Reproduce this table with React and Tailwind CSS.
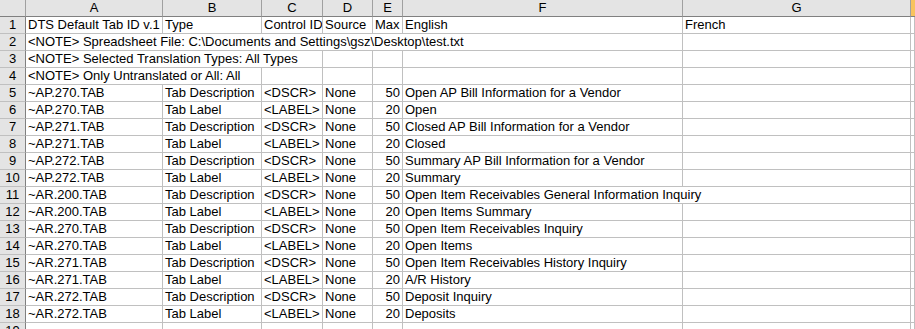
import React from "react";

const rows = [
  ["~AP.270.TAB", "Tab Description", "<DSCR>", "None", "50", "Open AP Bill Information for a Vendor"],
  ["~AP.270.TAB", "Tab Label", "<LABEL>", "None", "20", "Open"],
  ["~AP.271.TAB", "Tab Description", "<DSCR>", "None", "50", "Closed AP Bill Information for a Vendor"],
  ["~AP.271.TAB", "Tab Label", "<LABEL>", "None", "20", "Closed"],
  ["~AP.272.TAB", "Tab Description", "<DSCR>", "None", "50", "Summary AP Bill Information for a Vendor"],
  ["~AP.272.TAB", "Tab Label", "<LABEL>", "None", "20", "Summary"],
  ["~AR.200.TAB", "Tab Description", "<DSCR>", "None", "50", "Open Item Receivables General Information Inquiry", true],
  ["~AR.200.TAB", "Tab Label", "<LABEL>", "None", "20", "Open Items Summary"],
  ["~AR.270.TAB", "Tab Description", "<DSCR>", "None", "50", "Open Item Receivables Inquiry"],
  ["~AR.270.TAB", "Tab Label", "<LABEL>", "None", "20", "Open Items"],
  ["~AR.271.TAB", "Tab Description", "<DSCR>", "None", "50", "Open Item Receivables History Inquiry"],
  ["~AR.271.TAB", "Tab Label", "<LABEL>", "None", "20", "A/R History"],
  ["~AR.272.TAB", "Tab Description", "<DSCR>", "None", "50", "Deposit Inquiry"],
  ["~AR.272.TAB", "Tab Label", "<LABEL>", "None", "20", "Deposits"],
];

const cell = "h-[17px] border-r border-b border-[#c0c0c0] bg-white overflow-hidden whitespace-nowrap pl-[2px] leading-[16px]";
const rh = "h-[17px] border-r border-b border-r-[#808080] border-b-[#c0c0c0] bg-[#e4e4e4] text-center leading-[16px]";
const ch = "h-[17px] border-r border-b border-r-[#a0a0a0] border-b-[#808080] bg-[#e4e4e4] text-center leading-[16px]";

function Cell({ children, span = "", right = false }) {
  return <div className={`${cell} ${span} ${right ? "text-right pr-[2px]" : ""}`}>{children}</div>;
}

export default function App() {
  return (
    <div
      className="w-[915px] h-[329px] overflow-hidden bg-white text-black text-[13px]"
      style={{ fontFamily: '"Liberation Sans", Arial, sans-serif' }}
    >
      <div className="grid grid-cols-[26px_137px_99px_61px_50px_30px_280px_228px_1fr]">
        <div className={ch + " border-r-[#808080]"}></div>
        {["A", "B", "C", "D", "E", "F", "G"].map((l) => (
          <div key={l} className={ch}>{l}</div>
        ))}
        <div className="h-[17px] border-b border-b-[#808080] bg-[#f8c35e]"></div>

        <div className={rh}>1</div>
        <Cell>DTS Default Tab ID v.1</Cell>
        <Cell>Type</Cell>
        <Cell>Control ID</Cell>
        <Cell>Source</Cell>
        <Cell>Max</Cell>
        <Cell>English</Cell>
        <Cell>French</Cell>
        <Cell></Cell>

        <div className={rh}>2</div>
        <Cell span="col-span-6">{"<NOTE> Spreadsheet File: C:\\Documents and Settings\\gsz\\Desktop\\test.txt"}</Cell>
        <Cell></Cell>
        <Cell></Cell>

        <div className={rh}>3</div>
        <Cell span="col-span-3">{"<NOTE> Selected Translation Types: All Types"}</Cell>
        <Cell></Cell>
        <Cell></Cell>
        <Cell></Cell>
        <Cell></Cell>
        <Cell></Cell>

        <div className={rh}>4</div>
        <Cell span="col-span-2">{"<NOTE> Only Untranslated or All: All"}</Cell>
        <Cell></Cell>
        <Cell></Cell>
        <Cell></Cell>
        <Cell></Cell>
        <Cell></Cell>
        <Cell></Cell>

        {rows.map((r, i) => (
          <React.Fragment key={i}>
            <div className={rh}>{i + 5}</div>
            <Cell>{r[0]}</Cell>
            <Cell>{r[1]}</Cell>
            <Cell>{r[2]}</Cell>
            <Cell>{r[3]}</Cell>
            <Cell right>{r[4]}</Cell>
            {r[6] ? (
              <Cell span="col-span-2">{r[5]}</Cell>
            ) : (
              <>
                <Cell>{r[5]}</Cell>
                <Cell></Cell>
              </>
            )}
            <Cell></Cell>
          </React.Fragment>
        ))}

        <div className={rh}>19</div>
        <Cell></Cell>
        <Cell></Cell>
        <Cell></Cell>
        <Cell></Cell>
        <Cell></Cell>
        <Cell></Cell>
        <Cell></Cell>
        <Cell></Cell>
      </div>
    </div>
  );
}
